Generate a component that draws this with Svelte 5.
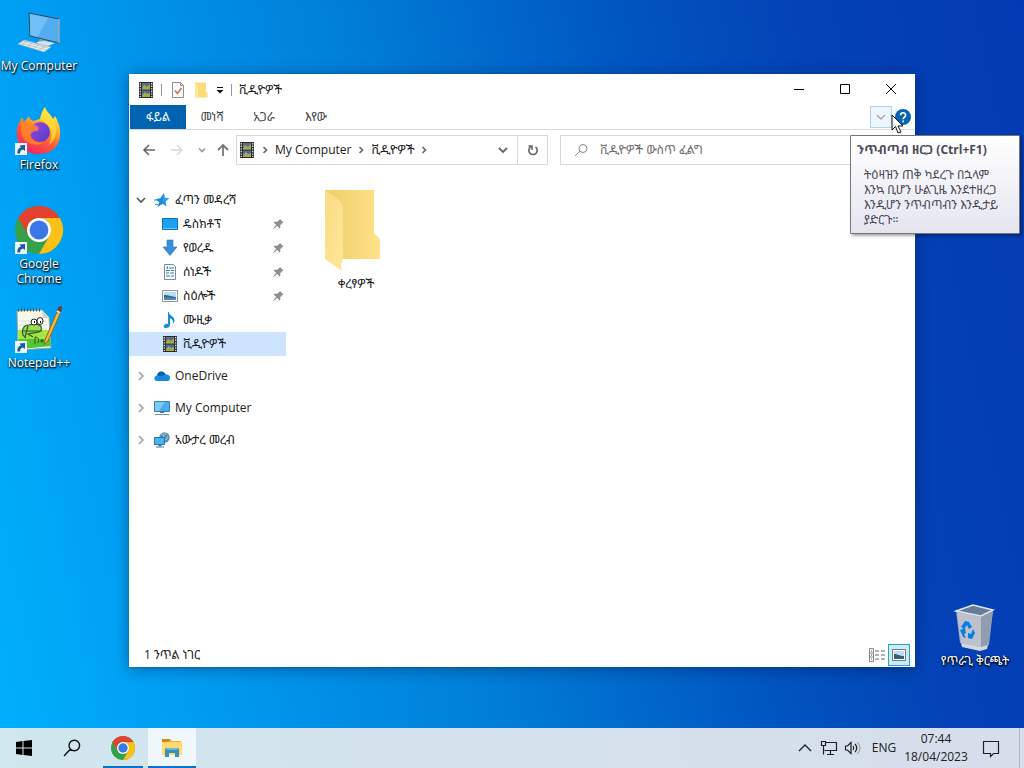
<script>
	const shortcuts = [
		{ id: 'computer', label: 'My Computer' },
		{ id: 'firefox', label: 'Firefox', link: true },
		{ id: 'chrome', label: 'Google Chrome', link: true },
		{ id: 'notepad', label: 'Notepad++', link: true }
	];

	const quickAccess = [
		{ id: 'desktop', label: 'ዴስክቶፕ', pinned: true },
		{ id: 'downloads', label: 'የወረዱ', pinned: true },
		{ id: 'documents', label: 'ሰነዶች', pinned: true },
		{ id: 'pictures', label: 'ስዕሎች', pinned: true },
		{ id: 'music', label: 'ሙዚቃ' },
		{ id: 'videos', label: 'ቪዲዮዎች' }
	];

	const places = [
		{ id: 'onedrive', label: 'OneDrive' },
		{ id: 'pc', label: 'My Computer' },
		{ id: 'network', label: 'አውታረ መረብ' }
	];

	const tabs = ['ፋይል', 'መነሻ', 'አጋራ', 'እየው'];

	let selected = $state('videos');
	let query = $state('');
</script>

{#snippet chevron(dir)}
	<svg class="chevron {dir}" viewBox="0 0 10 10" width="10" height="10" aria-hidden="true">
		<path d="M3.500 2 6.500 5 3.500 8" fill="none" stroke="currentColor" stroke-width="1.6" />
	</svg>
{/snippet}

{#snippet chromeLogo(size)}
	<svg viewBox="0 0 48 48" width={size} height={size} aria-hidden="true">
		<circle cx="24" cy="24" r="24" fill="#36a04b" />
		<path d="M3.2 12A24 24 0 0 1 44.8 12H24A12 12 0 0 0 13.6 30Z" fill="#e2412f" />
		<path d="M44.8 12A24 24 0 0 1 24 48L34.4 30A12 12 0 0 0 24 12Z" fill="#fbc116" />
		<circle cx="24" cy="24" r="12" fill="#fff" />
		<circle cx="24" cy="24" r="9.4" fill="#3b78e7" />
	</svg>
{/snippet}

{#snippet icon(id)}
	<svg viewBox="0 0 16 16" width="16" height="16" aria-hidden="true">
		{#if id === 'videos'}
			<path d="M1 0h14v16H1z" fill="#272d33" />
			<path d="M4 1h8v6.5H4z" fill="#596d8c" />
			<path d="M4 8.5h8V15H4z" fill="#426da9" />
			<path d="m4 6 2-3 3 2 3-3v5.5H4zM4 13l3-3 2 2 3-1v4H4z" fill="#aaa746" />
			<path d="M2.3 1v14M13.7 1v14" stroke="#eee6c0" stroke-width="1.3" stroke-dasharray="1.4 1.2" />
		{:else if id === 'star'}
			<path d="m10 1 .8 4.700 4.700.3-3.700 3.200.7 5.300-4-2.800L3.500 15l1.800-4.800L1.500 7.200l4.800-.9z" fill="#299cec" />
			<path d="m10 1-1.500 10.700-5 3.300 1.800-4.800L1.500 7.200l4.800-.9z" fill="#1678c4" opacity=".5" />
			<path d="M0 8h4M1 12.500h3" stroke="#299cec" />
		{:else if id === 'desktop'}
			<path d="M.5 2.5h15v11H.5z" fill="#1ea1f2" stroke="#0874bd" />
			<path d="M1 12h14v1H1z" fill="#70c8fa" />
		{:else if id === 'downloads'}
			<path d="M5 0h6v7h4l-7 8.5L1 7h4z" fill="#398ddb" stroke="#2b76c0" stroke-width=".6" />
		{:else if id === 'documents'}
			<path d="M2.5.5h9l2 2v13h-11z" fill="#f7fbfd" stroke="#7b9093" />
			<path d="M7 4h5M4 6.5h4M9 6.5h3M4 9h3M8 9h4M4 12h4M9 12h3" stroke="#347c9c" stroke-width="1.2" />
			<path d="m4 4 2-2v3z" fill="#248cc1" />
		{:else if id === 'pictures'}
			<path d="M.5 2.5h15v11H.5z" fill="#fff" stroke="#8c969c" />
			<path d="M2 4h12v8H2z" fill="#b9def5" />
			<path d="M2 7c4 0 6 1 12 2v3H2z" fill="#376a83" />
			<path d="M2 10c4-1 7 0 12 0v2H2z" fill="#5386b6" />
		{:else if id === 'music'}
			<path d="M7 0c0 4 6 4 5.500 9-.3 1-1 2.500-1.500 2.500C11.500 8 9.500 6.500 8 6.500V12c0 3-2 4-4 4-2.600 0-3-2-1.400-3.300C4 11.400 5.500 11.500 6 12V0z" fill="#168ed5" />
		{:else if id === 'onedrive'}
			<path d="M3 13C-1 12 0 8 3 7.4 4 3 9 2 11.5 6.2 15 6 17 9 15.6 11.6 15 13 13.8 13 13 13z" fill="#1490df" />
			<path d="M3 7.4C4 3 9 2 11.5 6.2L8 8.3z" fill="#0861b1" />
			<path d="M1.2 12 8 8.3l7.4 3.8q-.8.9-2.4.9H3q-1 0-1.800-1z" fill="#1c86d8" />
		{:else if id === 'pc'}
			<path d="M.5 1.5h15v10H.5z" fill="#4aaeec" stroke="#417fa9" />
			<path d="M1 2h10L5 11H1z" fill="#7accf8" />
			<path d="M6 12h4v1H6z" fill="#668" />
			<path d="M1 14.5h14" stroke="#6f95af" />
		{:else if id === 'network'}
			<circle cx="10.5" cy="5.5" r="5.2" fill="#5c8db3" />
			<path d="m7 2 3 1-1 3 3 2 2-4M10 0l2 3" fill="none" stroke="#a9c8dc" />
			<path d="M.5 5.500h10v7H.5z" fill="#48b5f1" stroke="#2574a7" />
			<path d="M5 13h2v1H5zM2 15h8" stroke="#4d7893" />
		{:else if id === 'help'}
			<circle cx="8" cy="8" r="8" fill="#0864b1" />
			<path d="M5.6 6.2c0-3.2 5-3.2 5 0 0 1.8-2.4 1.9-2.4 4M8.2 11.4v1.8" fill="none" stroke="#fff" stroke-width="1.6" />
		{:else if id === 'page'}
			<path d="M2.500.5h8l3 3v12h-11z" fill="#fafafa" stroke="#8e8e8e" />
			<path d="M10.500.5v3h3" fill="none" stroke="#8e8e8e" />
			<path d="m5 8.500 2.500 3 4-5.500" fill="none" stroke="#cb754c" stroke-width="1.600" />
		{:else if id === 'folder'}
			<path d="M2 .5h11v10h1.5v5H2z" fill="#fbdb77" />
			<path d="M2 .5 5 3v13l-3-1z" fill="#fee797" />
		{:else if id === 'pin'}
			<path d="m10 3 3.500 3.500-1.300.4-1.900 2.300v2.600l-.8.6-2.300-2.500L3.500 13l-.5-.5 3.200-3.600-2.500-2.400.8-.7h2.600l2.200-1.700z" fill="#8c9094" />
		{/if}
	</svg>
{/snippet}

{#snippet desktopIcon(id)}
	<svg viewBox="0 0 48 48" width="48" height="48" aria-hidden="true">
		{#if id === 'computer'}
			<g transform="translate(-6 0)">
				<path d="m20 5 30 6v24l-29-7z" fill="#52acf0" stroke="#374b5f" />
				<path d="m21 6 18 4-10 19-8-2z" fill="#85cbf9" opacity=".6" />
				<path d="M50 11v24" stroke="#c4e0ee" />
				<path d="m31 31 7 2-2 3-8-1z" fill="#87a6bc" />
				<path d="m28 34 8-1 10 2-7 3-11-2z" fill="#d6e5ee" />
				<path d="m9 36 6-4 27 7-7 5z" fill="#e9edef" stroke="#9aafbc" stroke-width=".7" />
				<path d="m12 35 25 7M14 33l25 7M18 33l-5 4M24 34l-6 5M30 36l-6 5M36 38l-6 4" stroke="#a9b8c2" stroke-width=".7" />
			</g>
		{:else if id === 'firefox'}
			<defs>
				<linearGradient id="fire" x1="35" y1="2" x2="12" y2="43" gradientUnits="userSpaceOnUse">
					<stop stop-color="#fff044" />
					<stop offset=".35" stop-color="#ffb12b" />
					<stop offset=".65" stop-color="#ff5936" />
					<stop offset="1" stop-color="#f52965" />
				</linearGradient>
				<linearGradient id="globe" x2="1" y2="1">
					<stop stop-color="#a144dc" />
					<stop offset="1" stop-color="#493fc9" />
				</linearGradient>
			</defs>
			<path d="M30 0c1 5 6 7 8 12l2-3c10 16 6 37-15 38C9 48 0 36 2 22c1-6 3-7 5-12l2 5 5-6c0 3 3 4 4 5l7-2c1-5 2-8 5-12z" fill="url(#fire)" />
			<circle cx="25" cy="25" r="10" fill="url(#globe)" />
			<path d="M6 15c6 3 10 0 16 4 2 1 3 3 0 5-4 0-6 2-7 4 1 5 6 9 14 7-8 6-20 1-22-7-1-5-1-9-1-13z" fill="#ff8a25" opacity=".8" />
			<path d="M30 0c1 6 7 8 9 15 4 9 2 18-5 23 3-7 4-14-1-20-4-5-7-4-8-7z" fill="#ffe23b" opacity=".7" />
		{:else if id === 'chrome'}
			{@render chromeLogo(48)}
		{:else if id === 'notepad'}
			<g transform="translate(-1 1)">
				<path d="m3 5 25-1 7 7 2 31-33 2z" fill="#f7f8e9" stroke="#9ca696" />
				<path d="m28 4 .5 8H35z" fill="#ced7ce" />
				<path d="M4 24h31l1 16-31 3z" fill="#a4e545" />
				<path d="M4 33h32l1 7-31 3z" fill="#50c733" />
				<path d="M5 15h27M5 19h28M5 23h28" stroke="#cad4dc" stroke-width=".6" />
				<path d="M4 4h22" stroke="#4d545a" stroke-width="3" stroke-dasharray="1 2" />
				<path d="M12 32c-6-4-4-13 3-13 8-2 14 0 12 5-2 4-8 2-13 4l5 3M8 25h20M14 20l-3 11" fill="#9fdb50" stroke="#275f23" stroke-width="1.200" />
				<ellipse cx="20" cy="16" rx="3" ry="3" fill="#fff" stroke="#222" />
				<ellipse cx="26" cy="15" rx="3" ry="3.500" fill="#fff" stroke="#222" />
				<path d="M20 16h1M26 16h1" stroke="#111" stroke-width="2" />
				<path d="M21 38v-7c4 0 4 3 3 6M26 35h4M28 33v4M31 34h4" stroke="#245b19" fill="none" />
				<path d="m31 34 12-28 3 2-12 27-4 4z" fill="#f2bd3f" stroke="#92641d" />
				<path d="m43 5 1-4 4-1v4l-2 3z" fill="#713d32" />
				<path d="m43 5 3 2" stroke="#dae5e9" stroke-width="2" />
			</g>
		{:else}
			<path d="m5 8 17-6 20 5-4 35-7 3L9 40z" fill="#9ea9bc" />
			<path d="m5 8 17-6 20 5-12 6z" fill="#697b9a" stroke="#dce8ee" stroke-width="1.5" />
			<path d="m6 9 24 5v30L10 40z" fill="#bcc1cd" />
			<path d="m30 14 12-6-5 34-7 2z" fill="#929caf" />
			<path d="m10 40 20 4 7-2-1 4-7 2-18-4z" fill="#d4d7df" />
			<path d="m10 24 4-6 4 1 3 5-3 2-2-4-3 4zM9 27l5-2 1 5-2 1 2 4-3-1zM17 35v-5l3 1 2-5 2 4-3 6z" fill="#087ee0" />
		{/if}
	</svg>
{/snippet}

<div class="screen">
	<main class="desktop">
		<nav class="shortcuts" aria-label="Desktop">
			{#each shortcuts as item (item.id)}
				<button class="shortcut">
					<span class="shortcut-icon">
						{@render desktopIcon(item.id)}
						{#if item.link}
							<svg class="link-badge" viewBox="0 0 12 12" width="12" height="12" aria-hidden="true">
								<path d="M0 0h12v12H0z" fill="#eef4f7" />
								<path d="M2.500 10.500C2 7 4 5 6 4.600L4.500 2.500 10 2v6L8 6.500C6 7 5 8 5 10.500z" fill="#175c9c" />
							</svg>
						{/if}
					</span>
					<span>{item.label}</span>
				</button>
			{/each}
		</nav>

		<button class="shortcut bin">
			<span class="shortcut-icon">{@render desktopIcon('bin')}</span>
			<span>የጥራጊ ቅርጫት</span>
		</button>

		<section class="window">
			<header class="titlebar">
				<div class="quick-tools">
					{@render icon('videos')}
					<span class="divider"></span>
					<button class="properties" aria-label="Properties">{@render icon('page')}</button>
					<button aria-label="New folder">{@render icon('folder')}</button>
					<button aria-label="Customize toolbar">
						<svg viewBox="0 0 8 8" width="8" height="8" aria-hidden="true">
							<path d="M1 1.500h6" stroke="#111" />
							<path d="M.5 4h7L4 7.500z" fill="#111" />
						</svg>
					</button>
					<span class="divider"></span>
				</div>
				<h1>ቪዲዮዎች</h1>
				<div class="controls">
					<button aria-label="Minimize">
						<svg viewBox="0 0 12 12" width="12" height="12"><path d="M1 6.500h10" stroke="#000" /></svg>
					</button>
					<button aria-label="Maximize">
						<svg viewBox="0 0 12 12" width="12" height="12"><path d="M1.500 1.500h9v9h-9z" fill="none" stroke="#000" /></svg>
					</button>
					<button aria-label="Close">
						<svg viewBox="0 0 12 12" width="12" height="12"><path d="m1 1 10 10M11 1 1 11" stroke="#000" /></svg>
					</button>
				</div>
			</header>

			<div class="ribbon">
				{#each tabs as tab, i}
					<button class="tab" class:file={i === 0}>{tab}</button>
				{/each}
				<div class="ribbon-end">
					<button class="expand" aria-label="ንጥብጣብ ዘርጋ" aria-describedby="ribbon-tip">
						<svg viewBox="0 0 10 10" width="10" height="10"><path d="m1 3 4 4 4-4" fill="none" stroke="currentColor" stroke-width="1.400" /></svg>
					</button>
					<button aria-label="Help">{@render icon('help')}</button>
				</div>
				<svg class="cursor" viewBox="0 0 13 20" width="13" height="20" aria-hidden="true">
					<path d="M1 1v15l3.500-3.500L7 19l3-1-3-6h5z" fill="#fff" stroke="#111" />
				</svg>
				<div class="tooltip" id="ribbon-tip" role="tooltip">
					<strong>ንጥብጣብ ዘርጋ (Ctrl+F1)</strong>
					<p>ትዕዛዝን ጠቅ ካደረጉ በኋላም<br />እንኳ ቢሆን ሁልጊዜ እንደተዘረጋ<br />እንዲሆን ንጥብጣብን እንዲታይ<br />ያድርጉ።</p>
				</div>
			</div>

			<div class="location">
				<div class="history">
					<button aria-label="Back">
						<svg viewBox="0 0 14 14" width="14" height="14"><path d="M13 7H2M7 2 2 7l5 5" fill="none" stroke="#666" stroke-width="1.6" /></svg>
					</button>
					<button aria-label="Forward" disabled>
						<svg viewBox="0 0 14 14" width="14" height="14"><path d="M1 7h11M7 2l5 5-5 5" fill="none" stroke="#d6d8da" stroke-width="1.4" /></svg>
					</button>
					<div class="history-end">
						<button class="recent" aria-label="Recent locations">{@render chevron('down')}</button>
						<button aria-label="Up">
							<svg viewBox="0 0 14 14" width="14" height="14"><path d="M7 13V2M2 7l5-5 5 5" fill="none" stroke="#777" stroke-width="1.8" /></svg>
						</button>
					</div>
				</div>
				<div class="address">
					<nav class="crumbs" aria-label="Address">
						{@render icon('videos')}
						{@render chevron('right')}
						<button>My Computer</button>
						{@render chevron('right')}
						<button>ቪዲዮዎች</button>
						{@render chevron('right')}
					</nav>
					<button class="previous" aria-label="Previous locations">
						<svg viewBox="0 0 10 10" width="10" height="10"><path d="m1 3 4 4 4-4" fill="none" stroke="currentColor" stroke-width="1.800" /></svg>
					</button>
					<button class="refresh" aria-label="Refresh">
						<svg viewBox="0 0 12 12" width="12" height="12"><path d="M8.500 3A4.200 4.200 0 1 1 3.500 3M1.500 2H5v4" fill="none" stroke="#666" stroke-width="1.600" /></svg>
					</button>
				</div>
				<label class="search">
					<svg viewBox="0 0 14 14" width="14" height="14" aria-hidden="true"><path d="M6 8 1 13M5 5.500a4 4 0 1 1 8 0 4 4 0 0 1-8 0z" fill="none" stroke="#888" /></svg>
					<input type="search" bind:value={query} placeholder="ቪዲዮዎች ውስጥ ፈልግ" aria-label="ቪዲዮዎች ውስጥ ፈልግ" />
				</label>
			</div>

			<div class="content">
				<nav class="sidebar" aria-label="Folders">
					<button class="row">
						<svg class="open" viewBox="0 0 10 10" width="10" height="10" aria-hidden="true"><path d="m1 3 4 4 4-4" fill="none" stroke="currentColor" stroke-width="1.600" /></svg>
						{@render icon('star')}
						<span>ፈጣን መዳረሻ</span>
					</button>
					{#each quickAccess as item (item.id)}
						<button class="row child" class:selected={selected === item.id} onclick={() => (selected = item.id)}>
							{@render icon(item.id)}
							<span>{item.label}</span>
							{#if item.pinned}{@render icon('pin')}{/if}
						</button>
					{/each}
					{#each places as item (item.id)}
						<button class="row place">
							<svg class="closed" viewBox="0 0 10 10" width="10" height="10" aria-hidden="true"><path d="m3 1 4 4-4 4" fill="none" stroke="currentColor" stroke-width="1.400" /></svg>
							{@render icon(item.id)}
							<span>{item.label}</span>
						</button>
					{/each}
				</nav>
				<div class="files">
					<button class="file-item">
						<svg viewBox="0 0 64 82" width="64" height="82" aria-hidden="true">
							<defs>
								<linearGradient id="back" x2="1">
									<stop stop-color="#efce68" />
									<stop offset="1" stop-color="#ffe28a" />
								</linearGradient>
								<linearGradient id="flap" y2="1">
									<stop stop-color="#f8dc83" />
									<stop offset="1" stop-color="#ffe79b" />
								</linearGradient>
							</defs>
							<path d="M1 1h49v42q0 2 2 3 4 3 4 6v18H1z" fill="url(#back)" />
							<path d="m1 1 13 9q5 4 5 9v50q0 4-2 6l1 7L1 70z" fill="url(#flap)" />
						</svg>
						<span>ቀረፃዎች</span>
					</button>
				</div>
			</div>

			<footer class="status">
				<span>1 ንጥል ነገር</span>
				<div class="views">
					<button aria-label="Details">
						<svg viewBox="0 0 18 14" width="18" height="14">
							<path d="M1.500.5h4v13h-4zM1.500 5h4M1.500 9h4" fill="none" stroke="#888" />
							<path d="M7 3h10M7 7h10M7 11h10" stroke="#666" stroke-dasharray="4 2" />
							<path d="M3 3h1M3 7h1M3 11h1" stroke="#555" />
						</svg>
					</button>
					<button class="active" aria-label="Large icons">
						<svg viewBox="0 0 14 12" width="14" height="12">
							<path d="M.5.5h13v11H.5z" fill="#fff" stroke="#777" />
							<path d="M2 2h10v8H2z" fill="#b9def5" />
							<path d="M2 5c4 0 5 2 10 2v3H2z" fill="#355f75" />
						</svg>
					</button>
				</div>
			</footer>
		</section>
	</main>

	<footer class="taskbar">
		<button aria-label="Start">
			<svg viewBox="0 0 16 16" width="16" height="16"><path d="m0 2 6.500-1v6.500H0zM7.500.9 16 0v7.500H7.500zM0 8.500h6.500V15L0 14zM7.500 8.500H16V16l-8.500-1z" /></svg>
		</button>
		<button aria-label="Search">
			<svg viewBox="0 0 18 18" width="18" height="18"><path d="m7.500 10-6.500 7M6 6.500a5.300 5.300 0 1 1 10.600 0 5.300 5.300 0 0 1-10.600 0z" fill="none" stroke="#111" stroke-width="1.400" /></svg>
		</button>
		<button class="running" aria-label="Google Chrome">{@render chromeLogo(24)}</button>
		<button class="running current" aria-label="File Explorer">
			<svg viewBox="0 0 22 20" width="22" height="20">
				<path d="M1 1h8l2 2h9v13H1z" fill="#e9b638" />
				<path d="M1 4h20v13H1z" fill="#ffd96e" />
				<path d="M1 1h8l-1 3H1z" fill="#c68d18" />
				<path d="M4 19v-7q0-2 2-2h10q2 0 2 2v7h-4v-4H8v4z" fill="#388fbe" />
				<path d="M6 10h10v2H6z" fill="#66bce1" />
			</svg>
		</button>
		<div class="tray">
			<button aria-label="Show hidden icons">
				<svg viewBox="0 0 14 14" width="14" height="14"><path d="m1 10 6-6 6 6" fill="none" stroke="#222" stroke-width="1.400" /></svg>
			</button>
			<button aria-label="Network">
				<svg viewBox="0 0 18 14" width="18" height="14"><path d="M5.500 1.500h11v8h-12M1.500.5h4v4h-4zM3.500 4.500v9M10.500 10v3M7 13.500h7" fill="none" stroke="#222" stroke-width="1.200" /></svg>
			</button>
			<button aria-label="Volume">
				<svg viewBox="0 0 18 14" width="18" height="14"><path d="M1.500 5h2L7 1.500v11L3.500 9h-2zM9 5q1.500 2 0 4M11 3q3.500 4 0 8" fill="none" stroke="#222" stroke-width="1.200" /><path d="M13.500 1q5 6 0 12" fill="none" stroke="#999" /></svg>
			</button>
			<button class="language">ENG</button>
			<button class="clock">
				<time datetime="07:44">07:44</time>
				<time datetime="2023-04-18">18/04/2023</time>
			</button>
			<button class="notice" aria-label="Notifications">
				<svg viewBox="0 0 18 17" width="18" height="17"><path d="M1.500 1.500h15v12h-5l-3 3v-3h-7z" fill="none" stroke="#222" stroke-width="1.200" /></svg>
			</button>
		</div>
	</footer>
</div>

<style>
	:global(body) {
		margin: 0;
	}
	.screen {
		display: flex;
		flex-direction: column;
		min-height: 100vh;
		font: 12px/16px 'Open Sans', 'Noto Sans Ethiopic', 'Noto Sans', sans-serif;
		color: #202020;
		background: linear-gradient(78deg, #00b0fb, #009ff4 15%, #007fd8 42%, #0055c0 66%, #0441b6 82%, #033ab3);
	}
	button {
		display: flex;
		align-items: center;
		justify-content: center;
		margin: 0;
		padding: 0;
		border: 0;
		background: none;
		color: inherit;
		font: inherit;
	}
	svg {
		display: block;
		flex: none;
		overflow: visible;
	}
	.desktop {
		position: relative;
		flex: 1;
		overflow: hidden;
	}
	.shortcuts {
		display: grid;
		grid-auto-rows: 99px;
		width: 78px;
		padding-top: 8px;
	}
	.shortcut {
		flex-direction: column;
		justify-content: flex-start;
		gap: 2px;
		color: #fff;
		line-height: 15px;
		text-shadow: 1px 1px 2px #000, 0 1px 2px #000;
	}
	.shortcut-icon {
		position: relative;
	}
	.link-badge {
		position: absolute;
		left: 0;
		bottom: 0;
	}
	.bin {
		position: absolute;
		right: 5px;
		bottom: 60px;
		width: 88px;
		white-space: nowrap;
	}
	.window {
		position: absolute;
		inset: 74px 109px 61px 129px;
		display: flex;
		flex-direction: column;
		background: #fff;
		box-shadow: 0 2px 14px rgba(0, 20, 60, 0.45), 0 0 1px #096ba9;
	}
	.titlebar {
		display: flex;
		align-items: center;
		height: 31px;
	}
	.quick-tools {
		display: flex;
		align-items: center;
		gap: 7px;
		padding: 0 7px 0 9px;
	}
	.properties {
		padding-left: 1px;
	}
	.divider {
		width: 1px;
		height: 12px;
		background: #999;
	}
	h1 {
		margin: 0;
		font-size: 12px;
		font-weight: 400;
	}
	.controls {
		display: flex;
		align-self: flex-start;
		margin-left: auto;
		padding-right: 1px;
	}
	.controls button {
		width: 46px;
		height: 30px;
	}
	.ribbon {
		position: relative;
		display: flex;
		height: 24px;
		padding-left: 1px;
		border-bottom: 1px solid #dadbdc;
	}
	.tab {
		width: 52px;
		color: #444;
	}
	.file {
		width: 56px;
		color: #fff;
		background: #0063b1;
	}
	.ribbon-end {
		display: flex;
		gap: 3px;
		margin-left: auto;
		padding-right: 4px;
	}
	.expand {
		box-sizing: border-box;
		width: 22px;
		height: 22px;
		margin-top: 1px;
		border: 1px solid #a9d3ee;
		background: #edf6fc;
		color: #9daab5;
	}
	.cursor {
		position: absolute;
		top: 9px;
		right: 11px;
		z-index: 3;
	}
	.tooltip {
		position: absolute;
		z-index: 2;
		top: 30px;
		right: -105px;
		box-sizing: border-box;
		width: 170px;
		height: 99px;
		padding: 6px;
		border: 1px solid #767676;
		border-radius: 1px;
		background: linear-gradient(#fff, #e4e5f0);
		box-shadow: 2px 2px 3px rgba(0, 0, 0, 0.35);
		color: #4a4a56;
		white-space: nowrap;
	}
	.tooltip p {
		margin: 9px 0 0 7px;
		line-height: 15px;
	}
	.location {
		display: flex;
		align-items: center;
		height: 40px;
		padding-right: 7px;
	}
	.history {
		display: flex;
		align-items: center;
		justify-content: space-between;
		box-sizing: border-box;
		width: 107px;
		padding: 0 6px 0 13px;
	}
	.history-end {
		display: flex;
		gap: 9px;
	}
	.recent {
		color: #999;
	}
	.address {
		display: flex;
		flex: 310;
		margin-right: 12px;
	}
	.address,
	.search {
		box-sizing: border-box;
		height: 30px;
		border: 1px solid #d9d9d9;
	}
	.crumbs {
		display: flex;
		flex: 1;
		align-items: center;
		gap: 5px;
		padding-left: 2px;
	}
	.crumbs,
	.previous {
		color: #666;
	}
	.crumbs button {
		color: #202020;
	}
	.previous {
		width: 28px;
	}
	.refresh {
		width: 30px;
		border-left: 1px solid #d9d9d9;
	}
	.search {
		display: flex;
		flex: 320;
		align-items: center;
		gap: 12px;
		padding: 0 13px;
	}
	.search input {
		flex: 1;
		min-width: 0;
		padding: 0;
		border: 0;
		outline: 0;
		background: none;
		font: inherit;
	}
	.search input::placeholder {
		color: #6d6d6d;
		opacity: 1;
	}
	.chevron.down {
		transform: rotate(90deg);
	}
	.content {
		display: flex;
		flex: 1;
	}
	.sidebar {
		width: 157px;
		padding-top: 18px;
	}
	.row {
		gap: 5px;
		justify-content: flex-start;
		box-sizing: border-box;
		width: 100%;
		height: 24px;
		padding-left: 7px;
	}
	.open,
	.closed {
		margin-right: 3px;
		color: #555;
	}
	.closed {
		color: #999;
	}
	.child {
		padding: 0 0 0 33px;
	}
	.child span {
		flex: 1;
		text-align: left;
	}
	.selected {
		background: #cce4ff;
	}
	.place {
		margin-top: 8px;
	}
	.files {
		flex: 1;
		padding: 19px 24px;
	}
	.file-item {
		flex-direction: column;
		gap: 5px;
		width: 92px;
	}
	.status {
		display: flex;
		align-items: center;
		justify-content: space-between;
		height: 24px;
		padding: 0 5px 0 15px;
	}
	.views {
		display: flex;
	}
	.views button {
		box-sizing: border-box;
		width: 22px;
		height: 22px;
	}
	.views .active {
		border: 1px solid #28a6b8;
		background: #cceaf5;
	}
	.taskbar {
		display: flex;
		height: 40px;
		background: linear-gradient(90deg, #d0e7ef, #d4e1ed 45%, #d7deeb);
	}
	.taskbar > button {
		box-sizing: border-box;
		width: 48px;
	}
	.taskbar .running {
		width: 40px;
		margin: 0 5px 0 7px;
		border-top: 2px solid transparent;
		border-bottom: 2px solid #0872d0;
	}
	.taskbar .current {
		width: 48px;
		margin: 0;
		border-top-color: #f0f7fa;
		background: #f0f7fa;
	}
	.tray {
		display: flex;
		gap: 2px;
		margin-left: auto;
		padding-right: 4px;
	}
	.tray button {
		box-sizing: border-box;
		width: 22px;
	}
	.tray .language {
		width: 36px;
	}
	.tray .clock {
		flex-direction: column;
		width: 64px;
		line-height: 18px;
	}
	.tray .notice {
		width: 50px;
		padding-right: 8px;
		border-right: 1px solid #adb8c4;
	}
</style>
